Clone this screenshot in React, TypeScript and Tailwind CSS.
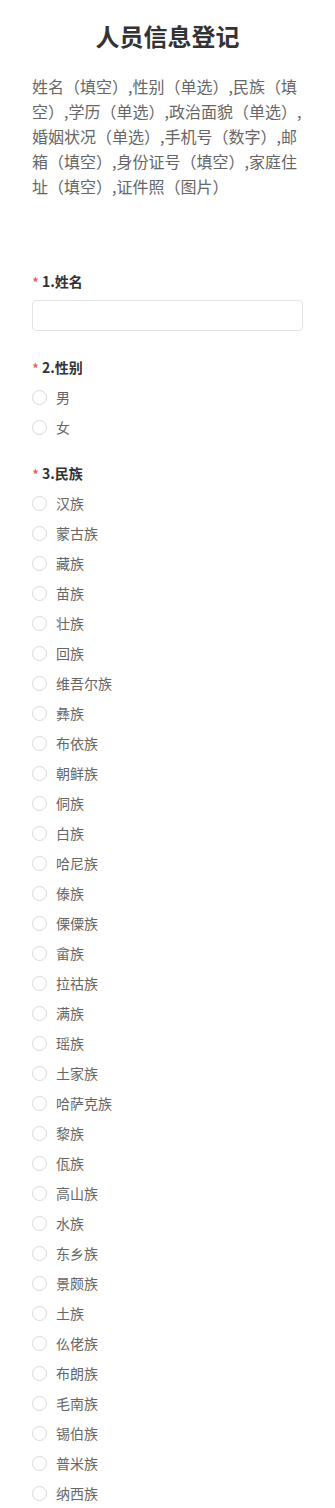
import React from 'react';

const ethnicGroups = [
    '汉族', '蒙古族', '藏族', '苗族', '壮族', '回族', '维吾尔族', '彝族', '布依族', '朝鲜族',
    '侗族', '白族', '哈尼族', '傣族', '傈僳族', '畲族', '拉祜族', '满族', '瑶族', '土家族',
    '哈萨克族', '黎族', '佤族', '高山族', '水族', '东乡族', '景颇族', '土族', '仫佬族', '布朗族',
    '毛南族', '锡伯族', '普米族', '纳西族',
];

function Label({ text }: { text: string }) {
    return (
        <div className="flex items-center h-5 leading-5 text-[14px] font-bold text-[#333]">
            <span className="text-[#f04e4e] text-[15px] font-normal mr-[3px] pt-[3px]">*</span>
            {text}
        </div>
    );
}

function RadioOption({ label }: { label: string }) {
    return (
        <label className="flex items-center h-[30px] gap-[9px] cursor-pointer">
            <span className="w-[15px] h-[15px] rounded-full border border-[#d9d9d9] bg-white shrink-0" />
            <span className="text-[14px] text-[#666]">{label}</span>
        </label>
    );
}

export default function App() {
    return (
        <div
            className="min-h-screen bg-white px-8"
            style={{ fontFamily: '"Noto Sans CJK SC", "Noto Sans", sans-serif' }}
        >
            <h1 className="pt-5 text-center text-[24px] leading-8 font-bold text-[#333]">
                人员信息登记
            </h1>
            <p className="mt-[22px] text-[16px] leading-[25px] text-[#666]">
                姓名（填空）,性别（单选）,民族（填空）,学历（单选）,政治面貌（单选）,婚姻状况（单选）,手机号（数字）,邮箱（填空）,身份证号（填空）,家庭住址（填空）,证件照（图片）
            </p>

            <form className="mt-[72px]">
                <div>
                    <Label text="1.姓名" />
                    <input
                        type="text"
                        className="mt-[9px] w-full h-[31px] px-2 border border-[#e3e3e3] rounded-[4px] outline-none text-[14px]"
                    />
                </div>

                <div className="mt-[26px]">
                    <Label text="2.性别" />
                    <div className="mt-[5px]">
                        <RadioOption label="男" />
                        <RadioOption label="女" />
                    </div>
                </div>

                <div className="mt-[21px]">
                    <Label text="3.民族" />
                    <div className="mt-[5px]">
                        {ethnicGroups.map((name) => (
                            <RadioOption key={name} label={name} />
                        ))}
                    </div>
                </div>
            </form>
        </div>
    );
}
